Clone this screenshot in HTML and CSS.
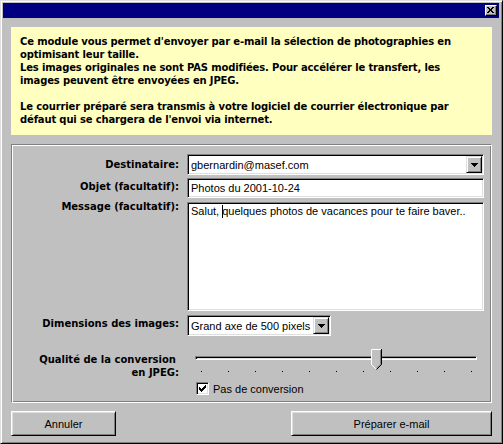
FILE: index.html
```html
<!DOCTYPE html>
<html lang="fr">
<head>
<meta charset="utf-8">
<title>Envoyer par e-mail</title>
<link rel="stylesheet" href="styles.css">
</head>
<body>
<div class="window">
  <div class="titlebar">
    <div class="close-btn">
      <svg width="7" height="6" viewBox="0 0 7 6" shape-rendering="crispEdges">
        <rect x="0" y="0" width="2" height="1" fill="#000"/><rect x="5" y="0" width="2" height="1" fill="#000"/>
        <rect x="1" y="1" width="2" height="1" fill="#000"/><rect x="4" y="1" width="2" height="1" fill="#000"/>
        <rect x="2" y="2" width="3" height="1" fill="#000"/>
        <rect x="2" y="3" width="3" height="1" fill="#000"/>
        <rect x="1" y="4" width="2" height="1" fill="#000"/><rect x="4" y="4" width="2" height="1" fill="#000"/>
        <rect x="0" y="5" width="2" height="1" fill="#000"/><rect x="5" y="5" width="2" height="1" fill="#000"/>
      </svg>
    </div>
  </div>
  <div class="content">
    <div class="info">
      <p>Ce module vous permet d'envoyer par e-mail la sélection de photographies en<br>optimisant leur taille.<br>Les images originales ne sont PAS modifiées. Pour accélérer le transfert, les<br>images peuvent être envoyées en JPEG.</p>
      <p>Le courrier préparé sera transmis à votre logiciel de courrier électronique par<br>défaut qui se chargera de l'envoi via internet.</p>
    </div>
    <div class="group">
      <div class="form">
        <label class="lbl">Destinataire:</label>
        <div class="combo combo-full">
          <span class="value">gbernardin@masef.com</span>
          <span class="drop"><svg width="7" height="4" viewBox="0 0 7 4" shape-rendering="crispEdges"><rect x="0" y="0" width="7" height="1"/><rect x="1" y="1" width="5" height="1"/><rect x="2" y="2" width="3" height="1"/><rect x="3" y="3" width="1" height="1"/></svg></span>
        </div>
        <label class="lbl">Objet (facultatif):</label>
        <div class="field field-objet">Photos du 2001-10-24</div>
        <label class="lbl lbl-top">Message (facultatif):</label>
        <div class="field field-message">Salut, <span class="caret"></span>quelques photos de vacances pour te faire baver..</div>
        <label class="lbl">Dimensions des images:</label>
        <div class="combo combo-small">
          <span class="value">Grand axe de 500 pixels</span>
          <span class="drop"><svg width="7" height="4" viewBox="0 0 7 4" shape-rendering="crispEdges"><rect x="0" y="0" width="7" height="1"/><rect x="1" y="1" width="5" height="1"/><rect x="2" y="2" width="3" height="1"/><rect x="3" y="3" width="1" height="1"/></svg></span>
        </div>
        <label class="lbl lbl-quality"><span class="lbl-line1">Qualité de la conversion</span><br>en JPEG:</label>
        <div class="quality">
          <div class="slider">
            <div class="track"></div>
            <div class="ticks"><i></i><i></i><i></i><i></i><i></i><i></i><i></i><i></i><i></i><i></i><i></i></div>
            <svg class="thumb" width="11" height="21" viewBox="0 0 11 21">
              <polygon points="0.5,0.5 10.5,0.5 10.5,15.5 5.5,20.5 0.5,15.5" fill="#c0c0c0"/>
              <polyline points="0.5,16 0.5,0.5 10,0.5" fill="none" stroke="#fff" stroke-width="1"/>
              <polyline points="0.5,15.5 5,20" fill="none" stroke="#fff" stroke-width="1"/>
              <polyline points="9.5,1 9.5,15.2 5.5,19.2" fill="none" stroke="#808080" stroke-width="1"/>
              <polyline points="10.5,0 10.5,15.5 5.5,20.5" fill="none" stroke="#000" stroke-width="1"/>
            </svg>
          </div>
          <div class="check">
            <span class="box"><svg width="7" height="7" viewBox="0 0 7 7" shape-rendering="crispEdges">
              <rect x="6" y="0" width="1" height="1"/>
              <rect x="5" y="1" width="2" height="1"/>
              <rect x="0" y="2" width="1" height="1"/><rect x="4" y="2" width="3" height="1"/>
              <rect x="0" y="3" width="2" height="1"/><rect x="3" y="3" width="3" height="1"/>
              <rect x="0" y="4" width="5" height="1"/>
              <rect x="1" y="5" width="3" height="1"/>
              <rect x="2" y="6" width="1" height="1"/>
            </svg></span>
            <span>Pas de conversion</span>
          </div>
        </div>
      </div>
    </div>
    <div class="buttons">
      <button class="btn btn-cancel" type="button">Annuler</button>
      <button class="btn btn-send" type="button">Préparer e-mail</button>
    </div>
  </div>
</div>
</body>
</html>
```

FILE: styles.css
```css
html, body {
  margin: 0;
  padding: 0;
}
body {
  width: 503px;
  height: 444px;
  overflow: hidden;
  background: #c0c0c0;
  font-family: "Liberation Sans", Arial, sans-serif;
  font-size: 11px;
  color: #000;
}
.window {
  box-sizing: border-box;
  width: 503px;
  height: 444px;
  background: #c0c0c0;
  border: 1px solid;
  border-color: #dfdfdf #000 #000 #dfdfdf;
  box-shadow: inset 1px 1px 0 #fff, inset -1px -1px 0 #808080;
  padding: 2px 3px 2px 2px;
  display: flex;
  flex-direction: column;
}
.titlebar {
  height: 15px;
  background: #000080;
  display: flex;
  justify-content: flex-end;
  align-items: flex-start;
  flex: none;
}
.close-btn {
  box-sizing: border-box;
  width: 12px;
  height: 11px;
  margin: 2px 2px 0 0;
  background: #c0c0c0;
  border: 1px solid;
  border-color: #fff #000 #000 #fff;
  box-shadow: inset -1px -1px 0 #808080;
  display: flex;
  align-items: center;
  justify-content: center;
}
.close-btn svg { display: block; margin: 0 1px 1px 0; }
.content {
  flex: 1;
  display: flex;
  flex-direction: column;
  padding: 9px 7px 0 8px;
}
.info {
  box-sizing: border-box;
  height: 108px;
  background: #ffffc0;
  padding: 8px 9px 0 9px;
  font-family: "DejaVu Sans", "Liberation Sans", sans-serif;
  font-size: 10px;
  font-weight: bold;
  letter-spacing: -0.15px;
  line-height: 13px;
  white-space: nowrap;
}
.info p { margin: 0 0 13px 0; }
.group {
  box-sizing: border-box;
  height: 259px;
  margin-top: 9px;
  border: 1px solid;
  border-color: #808080 #fff #fff #808080;
  box-shadow: inset 1px 1px 0 #fff, inset -1px -1px 0 #808080;
  padding: 9px 0 0 1px;
}
.form {
  display: grid;
  grid-template-columns: 166px 297px;
  column-gap: 8px;
  align-items: center;
}
.lbl {
  font-family: "DejaVu Sans", "Liberation Sans", sans-serif;
  font-size: 10px;
  font-weight: bold;
  text-align: right;
  white-space: nowrap;
}
.lbl-top { align-self: start; padding-top: 3px; }
.lbl-quality { align-self: start; margin-top: 17px; line-height: 13px; }
.lbl-line1 { padding-right: 3px; }
.combo, .field {
  box-sizing: border-box;
  background: #fff;
  border: 1px solid;
  border-color: #808080 #fff #fff #808080;
  box-shadow: inset 1px 1px 0 #000, inset -1px -1px 0 #dfdfdf;
  white-space: nowrap;
}
.combo {
  height: 21px;
  display: flex;
  align-items: center;
  padding: 1px;
}
.combo .value { flex: 1; padding-left: 2px; }
.combo-small { width: 144px; margin-top: 4px; }
.drop {
  box-sizing: border-box;
  width: 16px;
  height: 17px;
  background: #c0c0c0;
  border: 1px solid;
  border-color: #dfdfdf #000 #000 #dfdfdf;
  box-shadow: inset 1px 1px 0 #fff, inset -1px -1px 0 #808080;
  display: flex;
  align-items: center;
  justify-content: center;
}
.drop svg { display: block; fill: #000; margin-top: 1px; }
.field { padding: 2px 3px; }
.field-objet { height: 20px; margin-top: 3px; line-height: 14px; }
.field-message { height: 109px; margin-top: 4px; line-height: 13px; }
.caret {
  display: inline-block;
  width: 1px;
  height: 13px;
  background: #000;
  vertical-align: -3px;
  margin-right: -1px;
}
.quality {
  margin-top: 13px;
  display: flex;
  flex-direction: column;
}
.slider {
  position: relative;
  height: 24px;
}
.track {
  position: absolute;
  left: 8px;
  top: 7px;
  box-sizing: border-box;
  width: 282px;
  height: 4px;
  border: 1px solid;
  border-color: #808080 #fff #fff #808080;
  box-shadow: inset 1px 1px 0 #000, inset -1px -1px 0 #dfdfdf;
}
.ticks {
  position: absolute;
  left: 14px;
  top: 22px;
  width: 271px;
  display: flex;
  justify-content: space-between;
}
.ticks i { display: block; width: 1px; height: 1px; background: #000; }
.thumb {
  position: absolute;
  left: 184px;
  top: 0;
  display: block;
}
.check {
  display: flex;
  align-items: center;
  margin-top: 9px;
  padding-left: 9px;
}
.box {
  box-sizing: border-box;
  width: 13px;
  height: 13px;
  background: #fff;
  border: 1px solid;
  border-color: #808080 #fff #fff #808080;
  box-shadow: inset 1px 1px 0 #000, inset -1px -1px 0 #dfdfdf;
  display: flex;
  align-items: center;
  justify-content: center;
  margin-right: 4px;
}
.box svg { display: block; fill: #000; }
.buttons {
  display: flex;
  justify-content: space-between;
  margin-top: 8px;
}
.btn {
  box-sizing: border-box;
  height: 25px;
  background: #c0c0c0;
  border: 1px solid;
  border-color: #fff #000 #000 #fff;
  box-shadow: inset 1px 1px 0 #dfdfdf, inset -1px -1px 0 #808080;
  font-family: "Liberation Sans", Arial, sans-serif;
  font-size: 11px;
  color: #000;
  padding: 0;
  margin: 0;
}
.btn-cancel { width: 105px; }
.btn-send { width: 201px; }
```
